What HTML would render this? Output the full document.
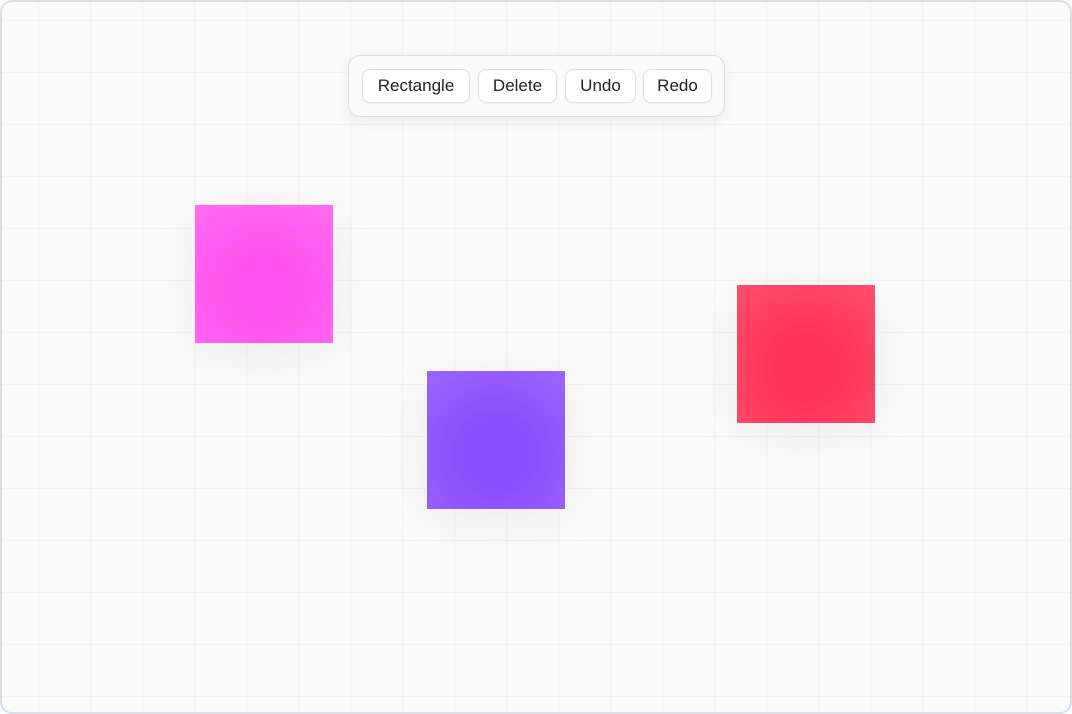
<!DOCTYPE html>
<html><head><style>
html,body{margin:0;padding:0;width:1072px;height:714px;background:#fff;overflow:hidden}
.c{position:absolute;left:0;top:0;width:1068px;height:710px;border:2px solid #dadee5;border-radius:12px;overflow:hidden;
background-color:#fafafb;
background-image:linear-gradient(to right,rgba(200,205,215,.18) 1px,transparent 1px),linear-gradient(to bottom,rgba(200,205,215,.18) 1px,transparent 1px);
background-size:52px 52px;background-position:36px 18px}
.tb{position:absolute;left:346px;top:53px;width:375px;height:60px;border:1px solid #dcdfe4;border-radius:12px;background:rgba(250,250,251,.95);box-shadow:0 4px 14px rgba(0,0,0,.06)}
.b{position:absolute;top:13px;height:32px;border:1px solid #dfe1e5;border-radius:8px;background:#fff;font:17px "Liberation Sans",sans-serif;color:#222;line-height:32px;text-align:center;box-shadow:0 1px 2px rgba(0,0,0,.04)}
.s{position:absolute;width:138px;height:138px;box-shadow:0 10px 50px rgba(0,0,0,.06)}
</style></head><body><div class="c">
<div class="tb">
<div class="b" style="left:13px;width:106px">Rectangle</div>
<div class="b" style="left:129px;width:77px">Delete</div>
<div class="b" style="left:216px;width:69px">Undo</div>
<div class="b" style="left:294px;width:67px">Redo</div>
</div>
<div class="s" style="left:193px;top:203px;background:radial-gradient(circle at 50% 60%,#ff52ec 30%,#ff6cf0 100%)"></div>
<div class="s" style="left:425px;top:369px;background:radial-gradient(circle at 50% 60%,#8b4dff 30%,#9b66ff 100%)"></div>
<div class="s" style="left:735px;top:283px;background:radial-gradient(circle at 50% 60%,#ff3358 30%,#ff4f6d 100%)"></div>
</div></body></html>
